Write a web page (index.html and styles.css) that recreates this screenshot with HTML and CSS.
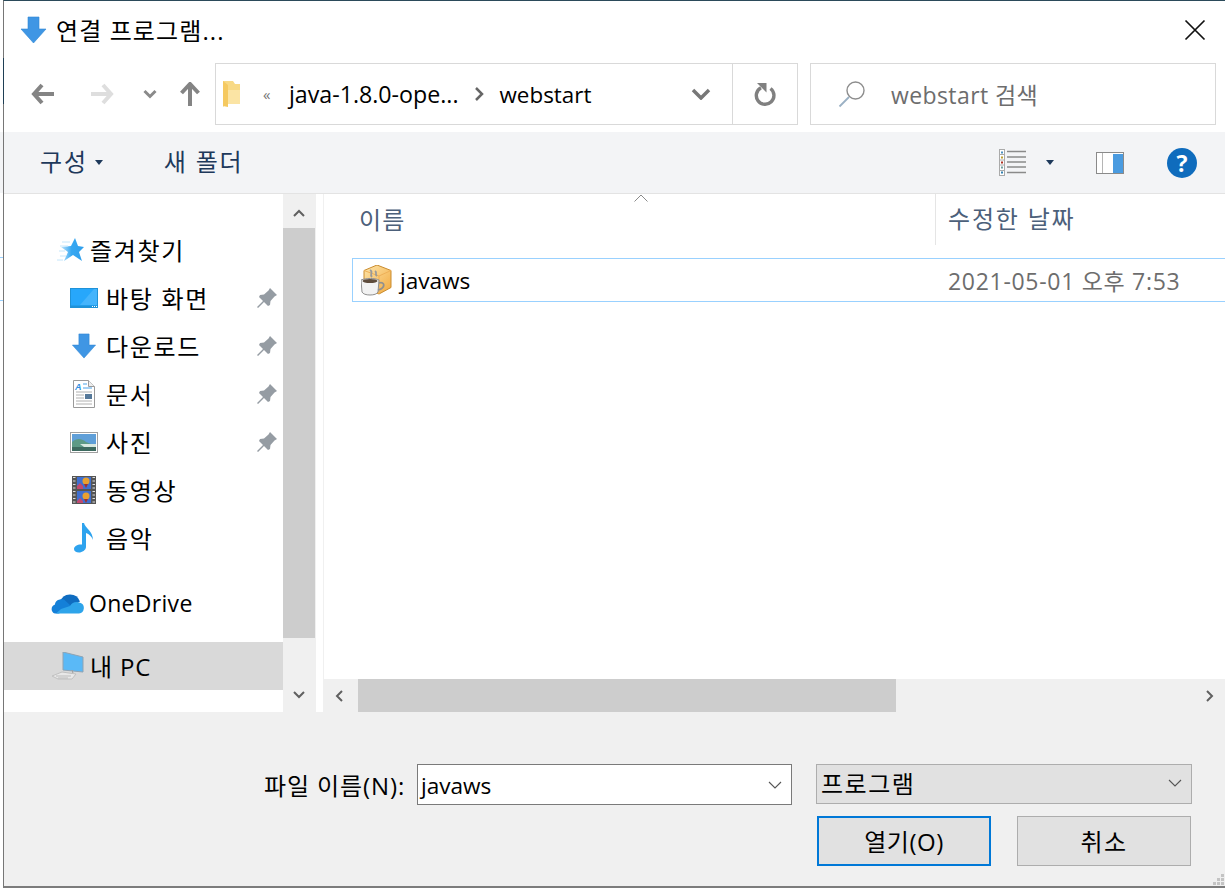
FILE: index.html
```html
<!DOCTYPE html>
<html lang="ko">
<head>
<meta charset="utf-8">
<title>연결 프로그램...</title>
<link rel="stylesheet" href="styles.css">
</head>
<body>
<div class="edge-band"></div>
<div class="edge-tick tick-a"></div>
<div class="edge-tick tick-b"></div>
<div class="window">
  <div class="edge-dark"></div>
  <header class="titlebar">
    <svg class="title-icon" width="27" height="28" viewBox="0 0 27 28"><path d="M8 1h11v12h7L13.500 27 1 13h7z" fill="#3f96e4" stroke="#2f86d4" stroke-width=".6"/></svg>
    <span class="title-text">연결 프로그램...</span>
    <svg class="close-icon" width="22" height="22" viewBox="0 0 22 22"><path d="M1.500 1.500l19 19M20.500 1.500l-19 19" stroke="#111" stroke-width="1.700" fill="none"/></svg>
  </header>

  <nav class="navbar">
    <div class="nav-buttons">
      <svg class="nav-back" width="24" height="22" viewBox="0 0 24 22"><path d="M11 2L3 11l8 9M3 11h20" stroke="#848484" stroke-width="4" fill="none"/></svg>
      <svg class="nav-forward" width="24" height="22" viewBox="0 0 24 22"><path d="M13 2l8 9-8 9M21 11H1" stroke="#dedede" stroke-width="4" fill="none"/></svg>
      <svg class="nav-recent" width="14" height="10" viewBox="0 0 14 10"><path d="M1.500 2L7 7.500 12.500 2" stroke="#8a8a8a" stroke-width="3" fill="none"/></svg>
      <svg class="nav-up" width="20" height="24" viewBox="0 0 20 24"><path d="M1.500 11L10 2l8.500 9M10 3v21" stroke="#848484" stroke-width="4" fill="none"/></svg>
    </div>
    <div class="address">
      <svg class="folder" width="19" height="28" viewBox="0 0 19 28"><path d="M1 1h10l2 3h5v20H6v-1L1 27z" fill="#f8d985"/><path d="M1 1l5 4v22l-5-1z" fill="#f5c960"/><path d="M6 10h12v14H6z" fill="#fbe4a4"/></svg>
      <span class="crumb-more">«</span>
      <span class="crumb parent">java-1.8.0-ope...</span>
      <svg class="crumb-sep" width="10" height="16" viewBox="0 0 10 16"><path d="M2 2l6 6-6 6" stroke="#666" stroke-width="2.500" fill="none"/></svg>
      <span class="crumb current">webstart</span>
      <svg class="address-drop" width="20" height="12" viewBox="0 0 20 12"><path d="M2 2l8 8 8-8" stroke="#777" stroke-width="3.500" fill="none"/></svg>
      <span class="address-refresh">
        <svg width="24" height="25" viewBox="0 0 24 25"><path d="M17.500 6.500a8.800 8.800 0 1 1-9.500-.8" stroke="#808080" stroke-width="3.400" fill="none"/><path d="M3 1h9.500v9.500z" fill="#808080" transform="translate(1 0)"/></svg>
      </span>
    </div>
    <div class="search">
      <svg width="28" height="28" viewBox="0 0 28 28"><circle cx="17.500" cy="10.500" r="8.500" stroke="#8d8d8d" stroke-width="1.400" fill="none"/><path d="M11 17L1.500 26.500" stroke="#9ab0c4" stroke-width="1.800"/></svg>
      <span class="search-text">webstart 검색</span>
    </div>
  </nav>

  <div class="toolbar">
    <span class="tool-btn">구성</span>
    <svg class="caret organize-caret" width="8" height="5" viewBox="0 0 8 5"><path d="M0 0h8L4 5z" fill="#1e395b"/></svg>
    <span class="tool-btn new-folder">새 폴더</span>
    <div class="tool-right">
      <svg class="view-icon" width="28" height="27" viewBox="0 0 28 27">
        <rect x=".5" y=".5" width="5" height="26" fill="#fff" stroke="#aaa"/>
        <path d="M1 5.500h4M1 11h4M1 16h4M1 21.500h4" stroke="#aaa"/>
        <rect x="2" y="2.500" width="2" height="2" fill="#4a90c0"/><rect x="2" y="7.500" width="2" height="2" fill="#c0a030"/><rect x="2" y="12.500" width="2" height="2" fill="#b03020"/><rect x="2" y="17.500" width="2" height="2" fill="#70a0a0"/><rect x="2" y="22.500" width="2" height="2" fill="#3080b0"/>
        <path d="M8 2.500h19M8 8h19M8 13h19M8 18h19M8 23.500h19" stroke="#8a8a8a" stroke-width="1.300"/>
      </svg>
      <svg class="caret view-caret" width="8" height="5" viewBox="0 0 8 5"><path d="M0 0h8L4 5z" fill="#1e395b"/></svg>
      <svg class="pane-icon" width="28" height="22" viewBox="0 0 28 22"><rect x=".5" y=".5" width="27" height="21" fill="#fff" stroke="#8a8a8a"/><path d="M6.500 1v20" stroke="#b5b5b5"/><rect x="17" y="2" width="10" height="19" fill="#4a9be0"/></svg>
      <span class="help-icon">?</span>
    </div>
  </div>

  <main class="main">
    <aside class="sidebar">
      <div class="tree">
        <div class="tree-row top first">
          <svg class="star" width="28" height="24" viewBox="0 0 28 24">
            <defs><linearGradient id="star-fill" x1="0" x2="1" y1="0" y2="0"><stop offset="0" stop-color="#bfe4fb"/><stop offset=".45" stop-color="#37a8f2"/><stop offset="1" stop-color="#2f9fec"/></linearGradient></defs>
            <path d="M18 0l3 8 6 1-5 5 3 9-9-6-9 6 4-9-7-5 10-1z" fill="url(#star-fill)"/>
            <path d="M0 22h6M3 18h6M2 13h6M5 4h8M3 8h8" stroke="#c4e6fb"/>
          </svg>
          <span>즐겨찾기</span>
        </div>
        <div class="tree-row child">
          <span class="icon-box"><svg width="28" height="20" viewBox="0 0 28 20"><rect width="28" height="20" fill="#1f92d8"/><rect x="1" y="1" width="26" height="16.500" fill="#27a7fb"/><path d="M10 17L24 1h3v16z" fill="#45b4fc"/><path d="M22 18.500h1M24 18.500h1M26 18.500h1" stroke="#fff"/></svg></span>
          <span>바탕 화면</span>
          <svg class="pin" width="20" height="20" viewBox="0 0 20 20"><use href="#pin-shape"/></svg>
        </div>
        <div class="tree-row child">
          <span class="icon-box"><svg width="26" height="26" viewBox="0 0 27 28"><path d="M8 1h11v12h7L13.500 27 1 13h7z" fill="#3f96e4" stroke="#2f86d4" stroke-width=".6"/></svg></span>
          <span>다운로드</span>
          <svg class="pin" width="20" height="20" viewBox="0 0 20 20"><use href="#pin-shape"/></svg>
        </div>
        <div class="tree-row child">
          <span class="icon-box"><svg width="22" height="28" viewBox="0 0 22 28"><path d="M.5.500h15l6 6v21H.5z" fill="#fff" stroke="#9a9a9a"/><path d="M15.500.500v6h6" fill="#eee" stroke="#9a9a9a"/><text class="doc-a" x="2" y="10">A</text><path d="M10 4h4M10 8h9" stroke="#4aa3e8"/><path d="M3 12h16M3 15h8M3 18h8M3 21h16M3 24h16" stroke="#b0b0b0"/><rect x="12" y="14" width="7" height="5" fill="#56799a"/></svg></span>
          <span>문서</span>
          <svg class="pin" width="20" height="20" viewBox="0 0 20 20"><use href="#pin-shape"/></svg>
        </div>
        <div class="tree-row child">
          <span class="icon-box"><svg width="28" height="21" viewBox="0 0 28 21"><rect x=".5" y=".5" width="27" height="20" fill="#fff" stroke="#a0a0a0"/><rect x="2" y="2" width="24" height="17" fill="#5f9fd8"/><path d="M2 10c5-5 11-3 14 0l10 4v5H2z" fill="#5d9a86"/><path d="M2 15h24v4H2z" fill="#3e6b60"/><path d="M10 12h16v3H14z" fill="#d8e8e0"/></svg></span>
          <span>사진</span>
          <svg class="pin" width="20" height="20" viewBox="0 0 20 20"><use href="#pin-shape"/></svg>
        </div>
        <div class="tree-row child">
          <span class="icon-box"><svg width="24" height="28" viewBox="0 0 24 28"><rect width="24" height="28" fill="#555"/><path d="M1 1.500h2.500M1 5h2.500M1 8.500h2.500M1 12h2.500M1 15.500h2.500M1 19h2.500M1 22.500h2.500M1 26h2.500M20.500 1.500H23M20.500 5H23M20.500 8.500H23M20.500 12H23M20.500 15.500H23M20.500 19H23M20.500 22.500H23M20.500 26H23" stroke="#ddd"/><rect x="5" y="1" width="14" height="12" fill="#3f6fd0"/><rect x="5" y="15" width="14" height="12" fill="#3f6fd0"/><circle cx="14" cy="5" r="3.500" fill="#e8a030"/><path d="M12 8h4l-2 4z" fill="#a03030"/><circle cx="14" cy="20" r="3.500" fill="#e8a030"/><path d="M12 23h4l-2 4z" fill="#a03030"/><path d="M5 10l3-3 3 3v3H5zM5 25l3-3 3 3v2H5z" fill="#c04a70"/></svg></span>
          <span>동영상</span>
        </div>
        <div class="tree-row child">
          <span class="icon-box"><svg width="20" height="30" viewBox="0 0 20 30"><path d="M8 0h2c1 5 9 8 9 17-1-3-4-6-7-7v14c0 3-4 5.500-7 5.500-3 0-5-1.500-5-3.500 0-3 4-5 8-4.500z" fill="#2ea3ee"/></svg></span>
          <span>음악</span>
        </div>
        <div class="tree-row top onedrive">
          <svg class="cloud" width="33" height="22" viewBox="0 0 33 22"><path d="M9 10A10.500 10.500 0 0 1 29 9.500L18 15z" fill="#0f6cc0"/><path d="M13 7.500C8 6.500 4 9 4 12.500 0 13.500-1 20 4 21.500h4L20 14z" fill="#1480d8"/><path d="M5 21.500H28A5.500 5.500 0 0 0 29 10.800C25 9 21 10.500 19 14L10 17z" fill="#2ea4ea"/></svg>
          <span>OneDrive</span>
        </div>
        <div class="tree-row top selected">
          <svg class="pc" width="32" height="28" viewBox="0 0 32 28"><path d="M11 0l20 5v15l-20-2z" fill="#5ab9f7" stroke="#8fa3b3"/><path d="M20 18l1 3-3 1" stroke="#a0a0a0" fill="none"/><path d="M0 24l10-4 14 2-4 5-14 0z" fill="#e8e8e8" stroke="#c0c0c0"/><path d="M4 24h15M6 26h10" stroke="#bcbcbc"/></svg>
          <span>내 PC</span>
        </div>
      </div>
      <div class="vscroll">
        <span class="arrow-box"><svg width="12" height="8" viewBox="0 0 12 8"><path d="M1 7l5-5 5 5" stroke="#606060" stroke-width="2" fill="none"/></svg></span>
        <div class="vthumb"></div>
        <div class="vfill"></div>
        <span class="arrow-box low"><svg width="12" height="8" viewBox="0 0 12 8"><path d="M1 1l5 5 5-5" stroke="#606060" stroke-width="2" fill="none"/></svg></span>
      </div>
    </aside>
    <div class="splitter"></div>
    <section class="files">
      <div class="file-pane">
        <div class="col-head">
          <span class="col-name">이름</span>
          <svg class="sort" width="14" height="8" viewBox="0 0 14 8"><path d="M.5 7.500L7 1l6.500 6.500" stroke="#8a8a8a" fill="none"/></svg>
          <span class="col-date">수정한 날짜</span>
        </div>
        <div class="file-row">
          <svg class="java-icon" width="31" height="31" viewBox="0 0 31 31">
            <defs><linearGradient id="box-fill" x1="0" x2="1" y1="0" y2="1"><stop offset="0" stop-color="#fde6ac"/><stop offset="1" stop-color="#f2a93e"/></linearGradient></defs>
            <path d="M16 0l14 5.500v17L18 29 3 22V5.500z" fill="url(#box-fill)" stroke="#c98b2e"/>
            <path d="M3 5.500L18 11l12-5.500M18 11v18" stroke="#eeb058" fill="none"/>
            <path d="M9 5c4 2-1 4 2 7M14 6c3 2-1 3 2 5" stroke="#9a9a9a" stroke-width="1.800" fill="none"/>
            <path d="M0 15c5-2 14-2 18 0l-1 12c-1 2-4 3-8 3s-7-1-8-3z" fill="#f2f2f2" stroke="#8f8f8f"/>
            <path d="M18 18c6-2 7 5-1 7" stroke="#909090" stroke-width="1.800" fill="none"/>
            <ellipse cx="9" cy="16" rx="7.500" ry="2" fill="#5e4c3c"/>
          </svg>
          <span class="file-name">javaws</span>
          <span class="file-date">2021-05-01 오후 7:53</span>
        </div>
      </div>
      <div class="hscroll">
        <svg width="8" height="12" viewBox="0 0 8 12"><path d="M7 1L2 6l5 5" stroke="#606060" stroke-width="2" fill="none"/></svg>
        <div class="hthumb"></div>
        <svg class="hright" width="8" height="12" viewBox="0 0 8 12"><path d="M1 1l5 5-5 5" stroke="#606060" stroke-width="2" fill="none"/></svg>
      </div>
    </section>
  </main>

  <footer class="footer">
    <div class="field-row">
      <label class="field-label">파일 이름(N):</label>
      <div class="name-input">
        <span>javaws</span>
        <svg width="14" height="8" viewBox="0 0 14 8"><path d="M1 1l6 6 6-6" stroke="#555" stroke-width="1.100" fill="none"/></svg>
      </div>
      <div class="type-select">
        <span>프로그램</span>
        <svg width="14" height="8" viewBox="0 0 14 8"><path d="M1 1l6 6 6-6" stroke="#555" stroke-width="1.100" fill="none"/></svg>
      </div>
    </div>
    <div class="button-row">
      <button class="btn primary">열기(O)</button>
      <button class="btn cancel">취소</button>
    </div>
    <svg class="grip" width="12" height="12" viewBox="0 0 12 12"><path d="M9 0h3v3H9zM5 4h3v3H5zM9 4h3v3H9zM1 8h3v3H1zM5 8h3v3H5zM9 8h3v3H9z" fill="#c4c4c4"/></svg>
  </footer>
</div>
<svg class="defs" width="0" height="0"><defs><g id="pin-shape"><path d="M13 0l7 7-2.500 1.500-4 4.500-.5 4-2 1-4-4-6 6-1-1 6-6-4-4 1-2 4-.5 4.500-4z" fill="#959ca3"/></g></defs></svg>
</body>
</html>
```
FILE: styles.css
```css
* { box-sizing: border-box; }
html, body { margin: 0; padding: 0; background: #fff; }
body {
  width: 1225px;
  height: 889px;
  overflow: hidden;
  position: relative;
  font-family: "Open Sans", "Noto Sans CJK KR", sans-serif;
  font-size: 24px;
  color: #000;
}
svg { display: block; flex: none; }
.defs { position: absolute; }

/* what shows of the desktop behind the dialog */
.edge-band { position: absolute; left: 0; top: 132px; width: 3px; height: 61px; background: #f3f4f6; }
.edge-tick { position: absolute; left: 0; width: 3px; height: 1px; background: #99d1ff; }
.tick-a { top: 257px; }
.tick-b { top: 300px; }
.edge-dark { position: absolute; left: -1px; top: 57px; width: 1px; height: 46px; background: #1f3f55; }

.window {
  width: 1222px;
  height: 888px;
  margin-left: 3px;
  position: relative;
  border-top: 1px solid #2b4a5a;
  border-left: 1px solid #767676;
  border-bottom: 2px solid #7c7c7c;
  display: flex;
  flex-direction: column;
  background: #fff;
}

/* title */
.titlebar { height: 61px; display: flex; align-items: center; padding: 0 18px 4px 16px; flex: none; }
.title-text { margin-left: 9px; font-size: 24px; letter-spacing: 1.100px; }
.close-icon { margin-left: auto; margin-right: 1px; }

/* nav */
.navbar { height: 70px; flex: none; display: flex; padding-top: 1px; align-items: flex-start; }
.nav-buttons { width: 211px; height: 61px; display: flex; align-items: center; padding-left: 27px; }
.nav-forward { margin-left: 35px; }
.nav-recent { margin-left: 29px; }
.nav-up { margin-left: 23px; }
.address {
  width: 583px; height: 62px;
  border: 1px solid #d9d9d9;
  display: flex; align-items: center;
  padding-left: 6px;
}
.folder { margin-right: 22px; }
.crumb-more { font-size: 15px; color: #777; width: 26px; }
.parent { font-size: 23.200px; }
.current { font-size: 22.400px; }
.crumb-sep { margin: 0 16px 0 15px; }
.address-drop { margin-left: auto; margin-right: 21px; }
.address-refresh { width: 65px; height: 100%; border-left: 1px solid #d9d9d9; display: flex; align-items: center; justify-content: center; }
.search {
  width: 406px; height: 62px; margin-left: 12px;
  border: 1px solid #d9d9d9;
  display: flex; align-items: center;
  padding-left: 27px;
}
.search-text { margin-left: 25px; font-size: 23px; color: #6d6d6d; letter-spacing: .4px; }

/* toolbar */
.toolbar {
  height: 62px; flex: none;
  display: flex; align-items: center;
  background: #f3f4f6;
  border-bottom: 1px solid #e3e3e3;
  padding-left: 36px;
  color: #1e395b;
}
.tool-btn { font-size: 24px; letter-spacing: 1.800px; padding-bottom: 4px; }
.organize-caret { margin-left: 7px; }
.new-folder { margin-left: 61px; }
.tool-right { margin-left: auto; display: flex; align-items: center; padding-right: 28px; }
.view-caret { margin-left: 19px; }
.pane-icon { margin-left: 42px; }
.help-icon {
  margin-left: 43px; width: 30px; height: 30px; border-radius: 50%;
  background: #0f6cbd; color: #fff;
  font: bold 23px/30px "Open Sans", sans-serif; text-align: center;
}

/* main */
.main { height: 518px; flex: none; display: flex; }
.sidebar { width: 312px; display: flex; flex: none; }
.tree { width: 279px; padding-top: 32px; }
.tree-row { height: 48px; display: flex; align-items: center; }
.tree-row > span:not(.icon-box) { font-size: 24px; letter-spacing: 1.700px; margin-bottom: 2px; }
.top { padding-left: 47px; }
.child { padding-left: 66px; padding-right: 6px; }
.icon-box { width: 28px; margin-right: 8px; display: flex; justify-content: center; flex: none; }
.star { margin: 0 5px 0 6px; }
.doc-a { font: italic bold 9px "Liberation Sans", sans-serif; fill: #2f8fe0; }
.pin { margin-left: auto; }
.onedrive { margin-top: 17px; }
.cloud { margin-right: 5px; }
.onedrive > span:not(.icon-box) { font-size: 23px; letter-spacing: .3px; margin-bottom: 0; }
.selected { margin-top: 15px; background: #d9d9d9; }
.selected > span:not(.icon-box) { letter-spacing: .8px; margin-left: -1px; }
.pc { margin: 0 7px 0 1px; }
.vscroll { width: 33px; background: #f0f0f0; display: flex; flex-direction: column; }
.arrow-box { height: 34px; width: 32px; padding-top: 4px; display: flex; align-items: center; justify-content: center; flex: none; }
.arrow-box.low { padding-top: 0; }
.vthumb { width: 32px; height: 410px; background: #cdcdcd; flex: none; }
.vfill { flex: 1; }
.splitter { width: 8px; flex: none; border-right: 1px solid #f0f0f0; }

.files { flex: 1; min-width: 0; display: flex; flex-direction: column; }
.file-pane { flex: 1; padding-left: 28px; overflow: hidden; }
.col-head { height: 51px; display: flex; align-items: center; font-size: 24px; color: #4c607a; position: relative; padding-left: 7px; }
.col-name { width: 576px; letter-spacing: 1.200px; padding-bottom: 2px; }
.sort { position: absolute; left: 282px; top: 0; }
.col-date { border-left: 1px solid #e5e5e5; height: 100%; padding-left: 12px; line-height: 50px; letter-spacing: 1.800px; }
.file-row {
  margin-top: 13px; height: 44px;
  border: 1px solid #99d1ff; border-right: 0;
  display: flex; align-items: center;
  padding-left: 8px;
}
.file-name { margin-left: 8px; width: 548px; font-size: 22.600px; }
.file-date { font-size: 23px; letter-spacing: .7px; color: #6d6d6d; }
.hscroll { height: 33px; flex: none; background: #f0f0f0; display: flex; align-items: center; padding: 0 11px; }
.hthumb { width: 538px; height: 100%; background: #cdcdcd; margin-left: 15px; }
.hright { margin-left: auto; }

/* footer */
.footer { flex: 1; background: #f0f0f0; position: relative; padding-top: 52px; }
.field-row { height: 41px; display: flex; align-items: flex-start; padding-left: 260px; }
.field-label { width: 153px; font-size: 24px; letter-spacing: .9px; line-height: 44px; white-space: nowrap; }
.name-input {
  width: 375px; height: 41px; background: #fff;
  border: 1px solid #7a7a7a;
  display: flex; align-items: center; justify-content: space-between;
  padding: 1px 9px 0 3px; font-size: 22.600px;
}
.type-select {
  width: 376px; height: 40px; margin-left: 24px;
  background: #e1e1e1; border: 1px solid #adadad;
  display: flex; align-items: center; justify-content: space-between;
  padding: 0 9px 3px 4px; font-size: 24px; letter-spacing: 1.500px;
}
.button-row { display: flex; padding-left: 813px; margin-top: 11px; gap: 26px; }
.btn {
  width: 174px; height: 50px;
  background: #e1e1e1; border: 1px solid #adadad;
  font: 24px "Open Sans", "Noto Sans CJK KR", sans-serif; color: #000;
  padding: 0 0 2px;
}
.primary { border: 2px solid #0078d7; letter-spacing: .5px; }
.cancel { letter-spacing: 1.500px; }
.grip { position: absolute; right: 1px; bottom: 0; }
```
